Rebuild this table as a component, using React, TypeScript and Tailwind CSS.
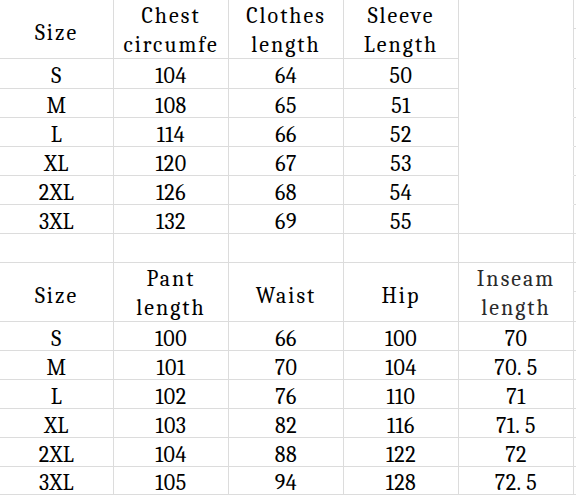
import React from "react";

type Row = { cells: string[]; head?: boolean; h: number; blank5?: boolean };

const line = "border-[#dcdcdc]";

const rows: Row[] = [
  { head: true, h: 59, blank5: true, cells: ["Size", "Chest\ncircumfe", "Clothes\nlength", "Sleeve\nLength", ""] },
  { h: 30, blank5: true, cells: ["S", "104", "64", "50", ""] },
  { h: 29, blank5: true, cells: ["M", "108", "65", "51", ""] },
  { h: 29, blank5: true, cells: ["L", "114", "66", "52", ""] },
  { h: 29, blank5: true, cells: ["XL", "120", "67", "53", ""] },
  { h: 29, blank5: true, cells: ["2XL", "126", "68", "54", ""] },
  { h: 29, cells: ["3XL", "132", "69", "55", ""] },
  { h: 29, cells: ["", "", "", "", ""] },
  { head: true, h: 59, cells: ["Size", "Pant\nlength", "Waist", "Hip", "Inseam\nlength"] },
  { h: 29, cells: ["S", "100", "66", "100", "70"] },
  { h: 29, cells: ["M", "101", "70", "104", "70.5"] },
  { h: 29, cells: ["L", "102", "76", "110", "71"] },
  { h: 29, cells: ["XL", "103", "82", "116", "71.5"] },
  { h: 29, cells: ["2XL", "104", "88", "122", "72"] },
  { h: 28, cells: ["3XL", "105", "94", "128", "72.5"] },
];

const widths = ["w-[114px]", "w-[115px]", "w-[115px]", "w-[115px]", "w-[115px]"];

function Cell({ text, head, col, blank }: { text: string; head?: boolean; col: number; blank?: boolean }) {
  const lines = text.split("\n");
  const two = lines.length > 1;
  return (
    <div
      className={`${widths[col]} shrink-0 border-r ${blank ? "border-b border-b-transparent" : "border-b"} ${line} flex flex-col items-center justify-center ${
        head ? (two ? "pt-[3px] tracking-[2px]" : "pt-[9px] tracking-[2px]") : "pt-[6px] tracking-[0.5px]"
      } ${col === 4 && head ? "text-[#2a2a2a]" : "text-black"}`}
    >
      {lines.map((l, i) => (
        <div key={i} className="leading-[29px] whitespace-nowrap">
          {l.includes(".") ? l.replace(".", ". ") : l}
        </div>
      ))}
    </div>
  );
}

export default function App() {
  return (
    <div className="w-[576px] h-[496px] overflow-hidden bg-white font-serif font-light text-[22px]">
      {rows.map((r, ri) => (
        <div key={ri} className="flex" style={{ height: r.h }}>
          {r.cells.map((c, ci) => (
            <Cell key={ci} text={c} head={r.head} col={ci} blank={r.blank5 && ci === 4} />
          ))}
          {r.head ? (
            <div className="flex-1 flex flex-col">
              <div className={`h-[29px] border-b ${line}`} />
              <div className={`flex-1 border-b ${line}`} />
            </div>
          ) : (
            <div className={`flex-1 border-b ${line}`} />
          )}
        </div>
      ))}
    </div>
  );
}
